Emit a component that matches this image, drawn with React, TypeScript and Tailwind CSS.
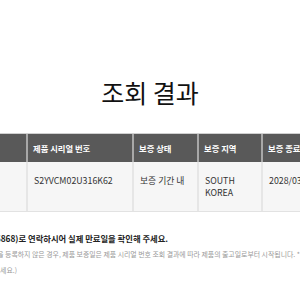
const cols = [
  { w: "w-[26px]", head: "", body: [""] },
  { w: "w-[106px]", head: "제품 시리얼 번호", body: ["S2YVCM02U316K62"] },
  { w: "w-[65px]", head: "보증 상태", body: ["보증 기간 내"] },
  { w: "w-[64px]", head: "보증 지역", body: ["SOUTH", "KOREA"] },
  { w: "w-[90px]", head: "보증 종료일", body: ["2028/03/15"] },
];

const App = () => {
  return (
    <div
      className="w-[300px] h-[300px] overflow-hidden bg-white flex flex-col"
      style={{ fontFamily: '"Noto Sans CJK KR", "Noto Sans", sans-serif' }}
    >
      {/* title */}
      <h1 className="pt-[78px] text-center text-[25px] leading-[28px] font-normal text-[#111]">
        조회 결과
      </h1>

      {/* result table */}
      <div className="mt-[27px] w-[300px] overflow-hidden">
        <div className="flex w-[360px] h-[29px] bg-[#595959] border-t border-[#d0d0d0]">
          {cols.map((c, i) => (
            <div
              key={i}
              className={`${c.w} shrink-0 flex items-center pl-[5px] text-[8.3px] font-bold text-white whitespace-nowrap ${
                i > 0 ? "border-l-2 border-[#a8a8a8]" : ""
              }`}
            >
              {c.head}
            </div>
          ))}
        </div>
        <div className="flex w-[360px] h-[50px] bg-[#f6f6f6] border-b border-[#e2e2e2]">
          {cols.map((c, i) => (
            <div
              key={i}
              className={`${c.w} shrink-0 pt-[13px] pl-[6px] text-[8.8px] leading-[12px] text-[#333] whitespace-nowrap ${
                i > 0 ? "border-l-2 border-[#e6e6e6]" : ""
              }`}
            >
              {c.body.map((t) => (
                <div key={t}>{t}</div>
              ))}
            </div>
          ))}
        </div>
      </div>

      {/* notes */}
      <div className="mt-[20px] w-[168px] flex justify-end overflow-hidden">
        <p className="whitespace-nowrap text-[8.3px] leading-[12px] font-bold text-[#222]">
          (1588-6868)로 연락하시어 실제 만료일을 확인해 주세요.
        </p>
      </div>
      <div className="mt-[2px] w-[300px] flex justify-end overflow-hidden">
        <p className="whitespace-nowrap text-[6.9px] leading-[16px] text-[#999]">
          제품을 등록하지 않은 경우, 제품 보증일은 제품 시리얼 번호 조회 결과에 따라 제품의 출고일로부터 시작됩니다. *
        </p>
      </div>
      <div className="w-[17px] flex justify-end overflow-hidden">
        <p className="whitespace-nowrap text-[6.9px] leading-[16px] text-[#999]">
          확인해 주세요.)
        </p>
      </div>
    </div>
  );
};

export default App;
